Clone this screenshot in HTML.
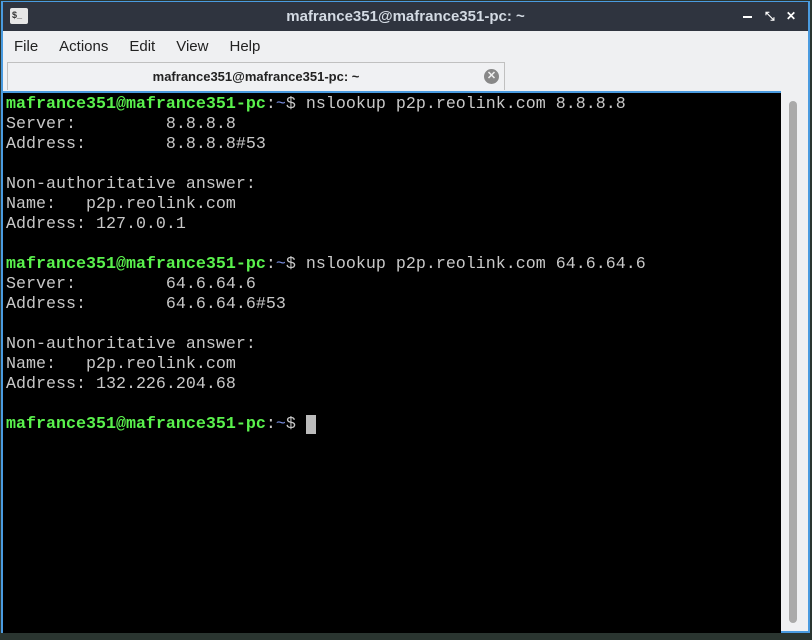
<!DOCTYPE html>
<html><head><style>
body{margin:0;width:812px;height:640px;background:#2a3530;position:relative;overflow:hidden;font-family:"Liberation Sans",sans-serif}
.win{position:absolute;left:1px;top:1px;width:805px;height:628px;border:2px solid #4a9be0;background:#eff0f2;box-sizing:content-box}
.title{position:absolute;left:0;top:-1px;width:805px;height:29px;background:#2f343f;color:#d3dae3;font-weight:bold;font-size:15px;text-align:center;line-height:29px}
.menu{position:absolute;top:28px;left:0;height:32px;font-size:15px;color:#222;line-height:32px}
.menu span{margin-left:11px;margin-right:10px}
.tab{position:absolute;left:4px;top:59px;width:498px;height:28px;border:1px solid #c0c0c0;border-bottom:none;background:#f0f1f3;font-size:13px;font-weight:bold;text-align:center;line-height:28px;color:#222;box-sizing:border-box}
.term{position:absolute;left:0;top:88px;width:778px;height:540px;background:#000;border-top:2px solid #4a9be0}
pre{margin:0;padding:2px 0 0 3px;font-family:"Liberation Mono",monospace;font-size:16.67px;line-height:20px;color:#c8c8c8}
.g{color:#5af24d;font-weight:bold}.b{color:#7a8fe0}
.sb{position:absolute;left:778px;top:90px;width:27px;height:538px;background:#eff0f2}
.th{position:absolute;left:8px;top:8px;width:8px;height:522px;border-radius:4px;background:#aaa}
.ctl{position:absolute;top:8px;color:#fff;font-size:12px;line-height:12px;font-weight:bold}
</style></head><body>
<div class="win">
<div class="title">mafrance351@mafrance351-pc: ~
<div style="position:absolute;left:7px;top:6px;width:18px;height:16px;background:#e6e6e6;border-radius:2px;color:#333;font-size:9px;line-height:14px;text-align:left;padding-left:2px;box-sizing:border-box">$_</div>
<div style="position:absolute;left:740px;top:14px;width:9px;height:2px;background:#fff"></div>
<div class="ctl" style="left:762px">⤡</div>
<div class="ctl" style="left:783px">✕</div>
</div>
<div class="menu"><span>File</span><span>Actions</span><span>Edit</span><span>View</span><span>Help</span></div>
<div class="tab">mafrance351@mafrance351-pc: ~
<div style="position:absolute;left:476px;top:6px;width:15px;height:15px;border-radius:50%;background:#888;color:#eee;font-size:11px;line-height:15px">✕</div></div>
<div class="term"><pre><span class="g">mafrance351@mafrance351-pc</span>:<span class="b">~</span>$ nslookup p2p.reolink.com 8.8.8.8
Server:         8.8.8.8
Address:        8.8.8.8#53

Non-authoritative answer:
Name:   p2p.reolink.com
Address: 127.0.0.1

<span class="g">mafrance351@mafrance351-pc</span>:<span class="b">~</span>$ nslookup p2p.reolink.com 64.6.64.6
Server:         64.6.64.6
Address:        64.6.64.6#53

Non-authoritative answer:
Name:   p2p.reolink.com
Address: 132.226.204.68

<span class="g">mafrance351@mafrance351-pc</span>:<span class="b">~</span>$ <span style="background:#bbb">&nbsp;</span></pre></div>
<div class="sb"><div class="th"></div></div>
</div>
</body></html>
